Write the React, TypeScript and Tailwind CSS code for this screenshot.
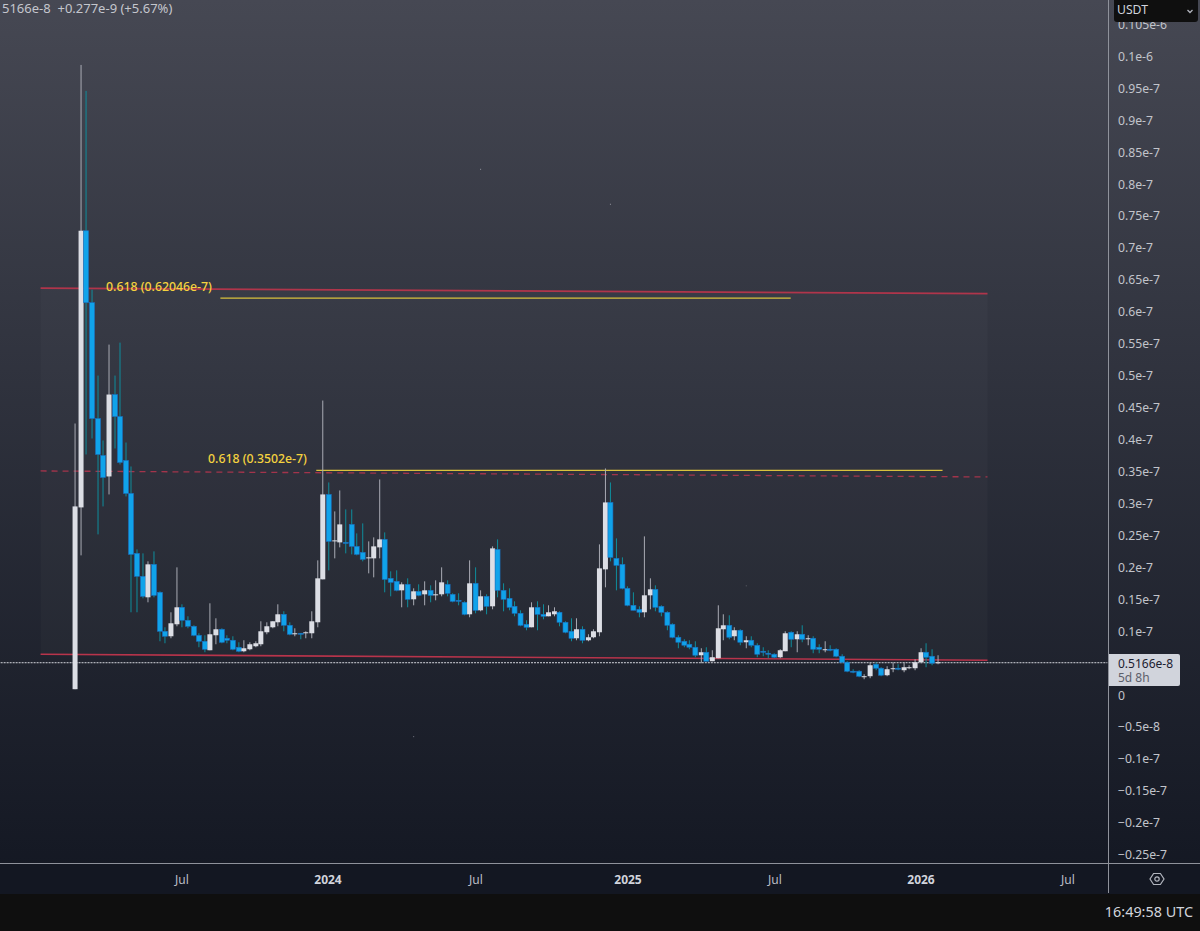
// price axis + time axis labels
const priceLabels = [
  '0.105e-6', '0.1e-6', '0.95e-7', '0.9e-7', '0.85e-7', '0.8e-7', '0.75e-7', '0.7e-7', '0.65e-7', '0.6e-7',
  '0.55e-7', '0.5e-7', '0.45e-7', '0.4e-7', '0.35e-7', '0.3e-7', '0.25e-7', '0.2e-7', '0.15e-7', '0.1e-7',
  '', '0', '\u22120.5e-8', '\u22120.1e-7', '\u22120.15e-7', '\u22120.2e-7', '\u22120.25e-7',
]

// w = white, b = blue: [kind, high, bodyTop, bodyBottom, low] in chart pixels
type Candle = [string, number, number, number, number]
const candles: Candle[] = [
  ['w', 424, 507, 690, 690], ['w', 65, 231, 508, 556], ['b', 91, 231, 303, 455], ['b', 290, 303, 419, 439],
  ['b', 376, 419, 455, 535], ['b', 441, 456, 478, 507], ['w', 345, 395, 477, 495], ['b', 376, 395, 417, 449],
  ['b', 343, 417, 463, 465], ['b', 443, 461, 494, 497], ['b', 467, 494, 555, 613], ['b', 550, 554, 577, 613],
  ['b', 554, 577, 597, 599], ['w', 562, 565, 598, 603], ['b', 552, 565, 596, 598], ['b', 592, 593, 632, 642],
  ['b', 628, 632, 637, 644], ['w', 613, 624, 637, 639], ['w', 568, 608, 625, 627], ['b', 605, 608, 621, 628],
  ['b', 617, 621, 627, 629], ['b', 626, 627, 636, 637], ['b', 634, 636, 642, 648], ['b', 636, 642, 650, 653],
  ['w', 604, 635, 651, 651], ['w', 619, 630, 636, 645], ['b', 629, 630, 643, 644], ['b', 636, 639, 641, 644],
  ['b', 637, 641, 650, 651], ['b', 643, 648, 652, 653], ['w', 641, 649, 652, 653], ['w', 643, 645, 650, 651],
  ['w', 642, 644, 647, 648], ['w', 622, 632, 645, 647], ['w', 623, 627, 633, 635], ['w', 622, 622, 628, 629],
  ['w', 605, 615, 623, 627], ['b', 612, 615, 626, 632], ['b', 623, 626, 635, 636], ['w', 629, 634, 635, 637],
  ['b', 634, 634, 635, 640], ['w', 632, 633, 634, 639], ['w', 612, 622, 634, 639], ['w', 561, 579, 623, 628],
  ['w', 401, 495, 580, 580], ['b', 483, 495, 542, 571], ['w', 512, 541, 542, 559], ['w', 491, 525, 543, 548],
  ['b', 510, 543, 544, 554], ['b', 510, 525, 547, 555], ['b', 534, 547, 555, 556], ['b', 524, 553, 560, 562],
  ['w', 542, 558, 559, 574], ['w', 538, 547, 559, 578], ['w', 480, 540, 548, 559], ['b', 533, 540, 580, 593],
  ['b', 572, 579, 583, 597], ['b', 571, 582, 591, 592], ['w', 583, 585, 591, 608], ['b', 579, 585, 600, 608],
  ['w', 589, 592, 600, 606], ['b', 585, 592, 596, 597], ['w', 582, 591, 595, 606], ['b', 586, 591, 596, 603],
  ['w', 581, 595, 596, 601], ['w', 568, 583, 595, 597], ['b', 581, 585, 594, 597], ['b', 594, 595, 602, 603],
  ['b', 594, 601, 602, 606], ['b', 602, 603, 615, 616], ['w', 561, 584, 615, 618], ['b', 568, 584, 611, 614],
  ['w', 591, 597, 611, 612], ['b', 595, 597, 607, 615], ['w', 547, 549, 607, 610], ['b', 540, 550, 591, 598],
  ['b', 584, 591, 600, 612], ['b', 589, 599, 608, 611], ['b', 602, 607, 614, 617], ['b', 611, 614, 626, 627],
  ['b', 621, 625, 628, 631], ['w', 603, 608, 628, 628], ['b', 602, 608, 615, 631], ['b', 605, 615, 617, 620],
  ['w', 606, 613, 617, 617], ['w', 608, 612, 615, 617], ['b', 612, 613, 623, 627], ['b', 622, 623, 633, 634],
  ['b', 619, 632, 639, 642], ['w', 619, 630, 639, 641], ['b', 627, 630, 641, 644], ['w', 635, 638, 641, 642],
  ['w', 630, 632, 638, 639], ['w', 545, 569, 633, 637], ['w', 469, 503, 570, 588], ['b', 483, 503, 558, 562],
  ['b', 539, 559, 566, 591], ['b', 558, 565, 589, 590], ['b', 587, 589, 606, 607], ['b', 593, 606, 611, 611],
  ['b', 607, 610, 613, 618], ['w', 537, 596, 613, 618], ['w', 579, 590, 596, 610], ['b', 586, 590, 608, 612],
  ['b', 606, 607, 613, 617], ['b', 612, 613, 626, 631], ['b', 624, 625, 638, 639], ['b', 636, 638, 643, 649],
  ['b', 640, 642, 646, 648], ['b', 641, 645, 648, 650], ['b', 642, 648, 656, 658], ['w', 649, 653, 656, 664],
  ['b', 648, 653, 662, 662], ['w', 651, 658, 662, 662], ['w', 606, 629, 659, 659], ['w', 615, 626, 630, 641],
  ['b', 616, 626, 638, 640], ['w', 628, 631, 637, 641], ['b', 630, 631, 643, 646], ['w', 637, 641, 643, 649],
  ['b', 637, 641, 646, 648], ['b', 644, 646, 655, 658], ['b', 648, 652, 653, 657], ['b', 651, 654, 655, 659],
  ['b', 654, 655, 658, 659], ['w', 650, 651, 658, 659], ['w', 632, 634, 652, 652], ['b', 632, 633, 640, 648],
  ['w', 632, 635, 640, 653], ['b', 626, 635, 640, 643], ['w', 636, 639, 640, 646], ['b', 637, 639, 650, 654],
  ['b', 645, 648, 650, 654], ['w', 642, 650, 651, 653], ['b', 646, 650, 651, 652], ['b', 649, 650, 657, 658],
  ['b', 655, 657, 663, 664], ['b', 662, 663, 672, 673], ['b', 670, 672, 673, 674], ['b', 671, 672, 677, 678],
  ['w', 675, 677, 678, 680], ['w', 663, 666, 677, 679], ['b', 663, 665, 669, 671], ['b', 668, 669, 676, 677],
  ['w', 667, 670, 676, 677], ['w', 663, 669, 670, 673], ['b', 665, 669, 670, 671], ['w', 663, 668, 671, 673],
  ['w', 666, 668, 669, 670], ['w', 660, 663, 669, 671], ['w', 649, 653, 663, 664], ['b', 644, 653, 658, 668],
  ['b', 650, 657, 664, 666], ['w', 656, 663, 664, 665],
]

const candleX = (i: number) => Math.round(74 + i * 5.645)

const CandleMark = ({ c, i }: { c: Candle; i: number }) => {
  const x = candleX(i)
  const white = c[0] === 'w'
  return (
    <g>
      <rect x={x} y={c[1]} width={1} height={c[4] - c[1]} fill={white ? '#a9abb4' : '#0f8d9c'} />
      <rect
        x={x - 2}
        y={c[2]}
        width={5}
        height={Math.max(c[3] - c[2], 1)}
        fill={white ? '#dcdee5' : '#10a3ea'}
        stroke={white ? 'none' : '#1b6fc0'}
        strokeWidth={white ? 0 : 0.6}
      />
    </g>
  )
}

const ChartDrawing = () => (
  <svg className="absolute inset-0 w-full h-full" viewBox="0 0 1108 864">
    {/* fib box */}
    <polygon points="40,288 988,294 988,661 40,655" fill="#ffffff" fillOpacity="0.025" />
    <line x1="40" y1="288.5" x2="988" y2="294" stroke="#b0354b" strokeWidth="1.6" />
    <line x1="40" y1="471.5" x2="988" y2="477.5" stroke="#a3344b" strokeWidth="1.3" strokeDasharray="6 5" />
    <line x1="40" y1="655" x2="988" y2="661" stroke="#b8344b" strokeWidth="1.6" />
    <line x1="220" y1="298.5" x2="791" y2="298.5" stroke="#d9c23c" strokeWidth="1.2" />
    <line x1="316" y1="471" x2="943" y2="471" stroke="#d9c23c" strokeWidth="1.2" />

    {/* last price line */}
    <line x1="0" y1="663.5" x2="1108" y2="663.5" stroke="#d5d7de" strokeWidth="1" strokeDasharray="2 1" />

    {candles.map((c, i) => (
      <CandleMark key={i} c={c} i={i} />
    ))}

    {/* stray specks */}
    <rect x="480" y="169" width="1" height="1" fill="#9598a1" />
    <rect x="610" y="204" width="1" height="1" fill="#9598a1" />
    <rect x="413" y="737" width="1" height="1" fill="#787b86" />
    <rect x="746" y="586" width="1" height="1" fill="#5d606b" />
  </svg>
)

export default function App() {
  return (
    <div
      className="w-[1200px] h-[931px] overflow-hidden flex flex-col bg-[#0f0f0f] text-[12px] leading-none text-[#b2b5be]"
      style={{ fontFamily: '"Noto Sans", Roboto, sans-serif' }}
    >
      <div className="h-[894px] flex flex-col bg-gradient-to-b from-[#464853] to-[#131722]">
        <div className="h-[864px] flex border-b border-[#8f929b]">
          {/* Chart */}
          <div className="relative w-[1108px] overflow-hidden">
            <ChartDrawing />
            <p className="absolute left-[2px] top-[1px] text-[13px] leading-[14px] text-[#c4c6cd] whitespace-pre">
              5166e-8  +0.277e-9 (+5.67%)
            </p>
            <p className="absolute left-[106px] top-[280px] text-[#f5d33f] text-[12.3px] font-medium leading-[14px]">
              0.618 (0.62046e-7)
            </p>
            <p className="absolute left-[208px] top-[452px] text-[#f5d33f] text-[12.3px] font-medium leading-[14px]">
              0.618 (0.3502e-7)
            </p>
          </div>

          {/* Price axis */}
          <div className="relative w-[92px] border-l border-[#8f929b] pt-[9px] pl-[9px] text-[#c2c4cb] text-[12.2px]">
            {priceLabels.map((label, i) => (
              <div key={i} className="h-[31.95px] flex items-center">
                {label}
              </div>
            ))}
            <div className="absolute left-[5px] top-0 w-[84px] h-[22px] bg-[#0f0f0f] rounded-b-[3px] flex items-center justify-between pl-[3px] pr-[3px] pb-[1px] text-[#d1d4dc]">
              <span>USDT</span>
              <svg width="10" height="10" viewBox="0 0 10 10" fill="none">
                <path d="M2.5 4l2.5 2.5L7.5 4" stroke="#b2b5be" strokeWidth="1.3" />
              </svg>
            </div>
            <div className="absolute left-0 top-[654px] w-[71px] h-[32px] bg-[#d1d4dc] rounded-r-[2px] pl-[9px] pt-[3px] text-[#1c2030] text-[12px] leading-[14px]">
              <div>0.5166e-8</div>
              <div className="text-[#5d606b]">5d 8h</div>
            </div>
          </div>
        </div>

        {/* Time axis */}
        <div className="h-[29px] flex bg-[#131722]">
          <div className="w-[1108px] flex items-center pl-[162px] pt-[2px] text-[#bcbec6]">
            <span className="w-[40px] text-center">Jul</span>
            <span className="w-[40px] ml-[106px] text-center font-bold text-[#d1d4dc]">2024</span>
            <span className="w-[40px] ml-[108px] text-center">Jul</span>
            <span className="w-[40px] ml-[112px] text-center font-bold text-[#d1d4dc]">2025</span>
            <span className="w-[40px] ml-[107px] text-center">Jul</span>
            <span className="w-[40px] ml-[106px] text-center font-bold text-[#d1d4dc]">2026</span>
            <span className="w-[40px] ml-[107px] text-center">Jul</span>
          </div>
          <div className="w-[92px] border-l border-[#8f929b] flex items-center pl-[40px] pt-[1px]">
            <svg width="16" height="16" viewBox="0 0 16 16" fill="none">
              <path d="M4.6 2.5h6.8L15 8l-3.6 5.5H4.6L1 8z" stroke="#b2b5be" strokeWidth="1.2" />
              <circle cx="8" cy="8" r="2.2" stroke="#b2b5be" strokeWidth="1.2" />
            </svg>
          </div>
        </div>
      </div>

      {/* Bottom bar */}
      <div className="flex-1 flex items-center justify-end pr-[7px] text-[14.4px] text-[#d1d4dc]">
        16:49:58 UTC
      </div>
    </div>
  )
}
